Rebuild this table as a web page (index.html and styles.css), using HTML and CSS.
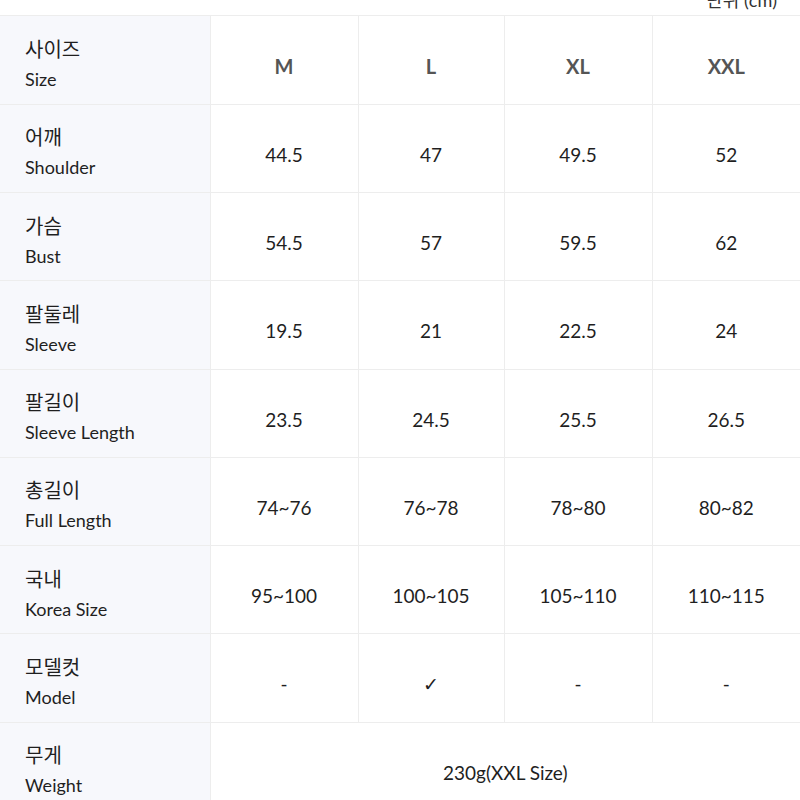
FILE: index.html
```html
<!DOCTYPE html>
<html lang="ko">
<head>
<meta charset="utf-8">
<link rel="stylesheet" href="styles.css">
</head>
<body>
<div class="unit"><span class="unit-text">단위 (cm)</span></div>
<table class="size-table">
  <colgroup>
    <col class="c-label"><col class="c-m"><col class="c-l"><col class="c-xl"><col class="c-xxl">
  </colgroup>
  <tr class="head">
    <th class="label"><span class="ko">사이즈</span><span class="en">Size</span></th>
    <th>M</th><th>L</th><th>XL</th><th>XXL</th>
  </tr>
  <tr>
    <th class="label"><span class="ko">어깨</span><span class="en">Shoulder</span></th>
    <td>44.5</td><td>47</td><td>49.5</td><td>52</td>
  </tr>
  <tr>
    <th class="label"><span class="ko">가슴</span><span class="en">Bust</span></th>
    <td>54.5</td><td>57</td><td>59.5</td><td>62</td>
  </tr>
  <tr>
    <th class="label"><span class="ko">팔둘레</span><span class="en">Sleeve</span></th>
    <td>19.5</td><td>21</td><td>22.5</td><td>24</td>
  </tr>
  <tr>
    <th class="label"><span class="ko">팔길이</span><span class="en">Sleeve Length</span></th>
    <td>23.5</td><td>24.5</td><td>25.5</td><td>26.5</td>
  </tr>
  <tr>
    <th class="label"><span class="ko">총길이</span><span class="en">Full Length</span></th>
    <td>74~76</td><td>76~78</td><td>78~80</td><td>80~82</td>
  </tr>
  <tr>
    <th class="label"><span class="ko">국내</span><span class="en">Korea Size</span></th>
    <td>95~100</td><td>100~105</td><td>105~110</td><td>110~115</td>
  </tr>
  <tr>
    <th class="label"><span class="ko">모델컷</span><span class="en">Model</span></th>
    <td class="dash">-</td><td class="check">✓</td><td class="dash">-</td><td class="dash">-</td>
  </tr>
  <tr>
    <th class="label"><span class="ko">무게</span><span class="en">Weight</span></th>
    <td colspan="4">230g(XXL Size)</td>
  </tr>
</table>
</body>
</html>
```

FILE: styles.css
```css
html, body {
  margin: 0;
  padding: 0;
  background: #ffffff;
}
body {
  width: 800px;
  height: 800px;
  overflow: hidden;
  font-family: Lato, "Noto Sans CJK KR", sans-serif;
  color: #222222;
}
.unit {
  height: 15px;
  overflow: hidden;
  text-align: right;
  padding-right: 23px;
  border-bottom: 1px solid #ededed;
}
.unit-text {
  display: inline-block;
  font-size: 18px;
  line-height: 18px;
  margin-top: -9px;
  color: #333;
  vertical-align: top;
}
.size-table {
  width: 800px;
  border-collapse: collapse;
  table-layout: fixed;
}
.c-label { width: 210px; }
.c-m { width: 148px; }
.c-l { width: 146px; }
.c-xl { width: 148px; }
.c-xxl { width: 148px; }
.size-table th,
.size-table td {
  height: 88.25px;
  box-sizing: border-box;
  border: 1px solid #ededed;
  border-top: none;
  padding: 12px 0 0 0;
  text-align: center;
  vertical-align: middle;
  font-size: 19px;
  font-weight: 400;
  color: #1f1f1f;
}
.size-table tr > :first-child { border-left: none; }
.size-table tr > :last-child { border-right: none; }
.size-table .label {
  background: #f7f8fc;
  text-align: left;
  padding: 8px 0 0 25px;
}
.ko {
  display: block;
  font-family: "Noto Sans CJK KR", sans-serif;
  font-size: 20px;
  line-height: 30px;
  font-weight: 400;
  color: #1f1f1f;
}
.en {
  display: block;
  font-family: Lato, sans-serif;
  font-size: 18px;
  line-height: 30px;
  color: #1f1f1f;
}
.head th:not(.label) {
  font-weight: 700;
  font-size: 20px;
  color: #555;
}
.dash {
  font-size: 16px;
}
.check {
  font-family: "DejaVu Sans", sans-serif;
  font-size: 21px;
}
```
